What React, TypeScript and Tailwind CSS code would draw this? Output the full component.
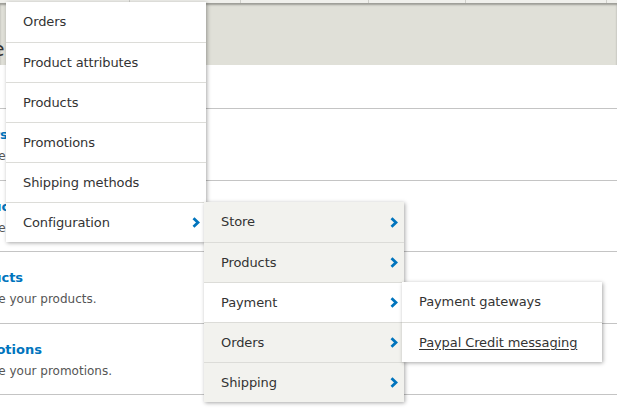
const font = { fontFamily: '"DejaVu Sans", "Liberation Sans", sans-serif' };

function Chevron() {
  return (
    <svg width="8" height="11" viewBox="0 0 8 11" className="shrink-0">
      <path d="M1.5 1.2 L6 5.5 L1.5 9.8" fill="none" stroke="#0074bd" strokeWidth="2.8" strokeLinejoin="miter" />
    </svg>
  );
}

type Item = { label: string; sub?: boolean; active?: boolean; link?: boolean };

function Menu({ items, className }: { items: Item[]; className: string }) {
  return (
    <div className={`absolute w-[200px] shadow-[1px_1px_4px_rgba(0,0,0,0.35)] ${className}`}>
      {items.map((it, i) => (
        <div
          key={it.label}
          className={`flex h-[40px] items-center justify-between pl-[17px] pr-[6px] text-[13px] text-[#333] ${
            i > 0 ? "border-t border-[#dcdcd8]" : ""
          } ${it.active ? "bg-white" : ""}`}
        >
          <span className={`tracking-[-0.1px] ${it.link ? "underline underline-offset-2" : ""}`}>{it.label}</span>
          {it.sub && <Chevron />}
        </div>
      ))}
    </div>
  );
}

const sections = [
  { title: "Orders", desc: "Manage your orders." },
  { title: "Product attributes", desc: "Manage your product attributes." },
  { title: "Products", desc: "Manage your products." },
  { title: "Promotions", desc: "Manage your promotions." },
];

export default function App() {
  return (
    <div className="relative h-[409px] w-[617px] overflow-hidden bg-white" style={font}>
      {/* toolbar strip */}
      <div className="flex h-[3px] bg-[#f0f0ec]">
        <div className="w-[130px] border-r border-[#cfcfca]" />
        <div className="w-[111px] border-r border-[#cfcfca]" />
        <div className="w-[128px] border-r border-[#cfcfca]" />
        <div className="w-[97px] border-r border-[#cfcfca]" />
        <div className="w-[141px] border-r border-[#cfcfca]" />
      </div>
      {/* page header */}
      <div className="h-[62px] bg-[#e0e0d8] shadow-[inset_0_2px_2px_rgba(0,0,0,0.3)]">
        <div className="-ml-[104px] pt-[34px] text-[20px] leading-[24px] text-[#333]">Commerce</div>
      </div>
      {/* content */}
      <div className="-ml-[42px]">
        <div className="h-[44px] border-b border-[#c4c4c4] pt-[14px]">
          <span className="pl-[2px] text-[13px] font-bold leading-[18px] text-[#0074bd]">Ill</span>
        </div>
        {sections.map((s) => (
          <div key={s.title} className="h-[71.5px] border-b border-[#c4c4c4] pt-[17px]">
            <div className="text-[13px] font-bold leading-[18px] text-[#0074bd]">{s.title}</div>
            <div className="mt-[4px] text-[12px] leading-[16px] text-[#555]">{s.desc}</div>
          </div>
        ))}
      </div>

      <Menu
        className="left-[6px] top-[2px] z-10 w-[199px] bg-white"
        items={[
          { label: "Orders" },
          { label: "Product attributes" },
          { label: "Products" },
          { label: "Promotions" },
          { label: "Shipping methods" },
          { label: "Configuration", sub: true },
        ]}
      />
      <Menu
        className="left-[204px] top-[202px] z-20 bg-[#f2f2ee]"
        items={[
          { label: "Store", sub: true },
          { label: "Products", sub: true },
          { label: "Payment", sub: true, active: true },
          { label: "Orders", sub: true },
          { label: "Shipping", sub: true },
        ]}
      />
      <Menu
        className="left-[402px] top-[282px] z-30 bg-white"
        items={[{ label: "Payment gateways" }, { label: "Paypal Credit messaging", link: true }]}
      />
    </div>
  );
}
